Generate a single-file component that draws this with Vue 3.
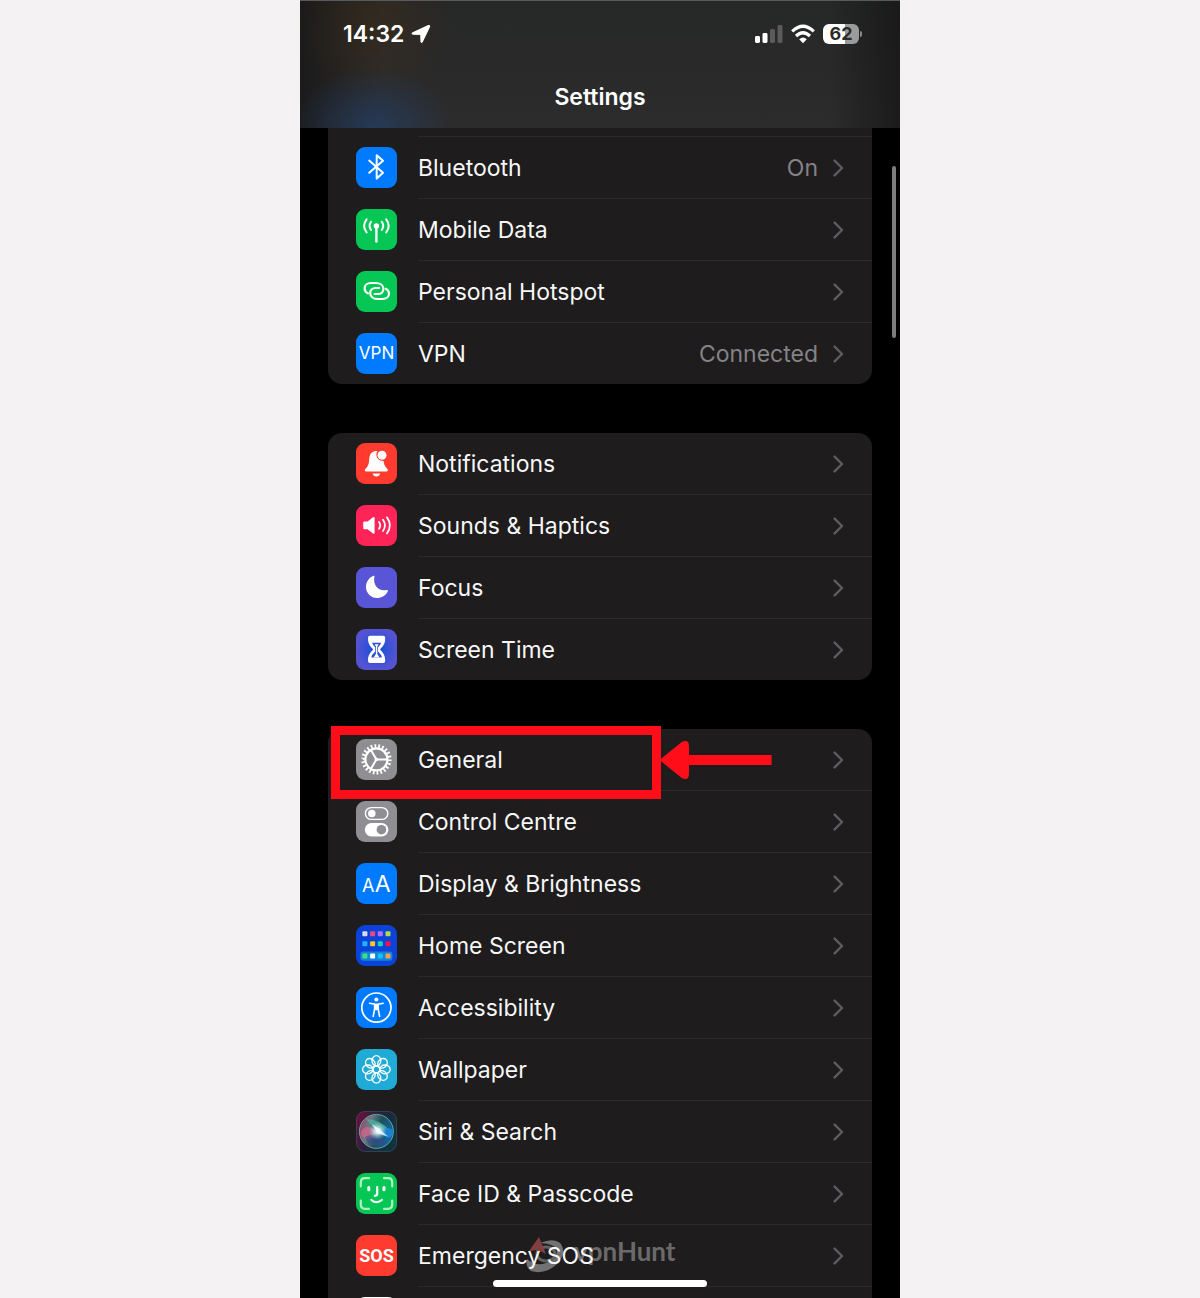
<template>
  <div class="page">
    <main class="phone">
      <!-- Header -->
      <header class="header">
        <div class="status-bar">
          <div class="status-left">
            <span>14:32</span>
            <svg width="20" height="20" viewBox="0 0 20 20" aria-hidden="true">
              <path d="M1.6 8.2 L17.2 1 Q19.8 0.4 19 3 L11.8 18 Q10.2 20 9.4 17.6 L9.2 11 L2 10.8 Q-0.6 9.8 1.6 8.2Z" fill="#fff" />
            </svg>
          </div>
          <div class="status-right">
            <svg width="28" height="20" viewBox="0 0 28 20" aria-hidden="true">
              <rect x="0" y="12" width="5" height="7" rx="1.4" fill="#fff" />
              <rect x="7.5" y="9" width="5" height="10" rx="1.4" fill="#fff" />
              <rect x="15" y="5" width="5" height="14" rx="1.4" fill="#5c5b5c" />
              <rect x="22.5" y="1" width="5" height="18" rx="1.4" fill="#5c5b5c" />
            </svg>
            <svg width="24" height="20" viewBox="0 0 24 20" aria-hidden="true">
              <g fill="none" stroke="#fff" stroke-width="3.2">
                <path d="M1.2 7.4 Q12 -2.8 22.8 7.4" />
                <path d="M5 12 Q12 5.4 19 12" />
              </g>
              <path d="M8.2 15.2 Q12 11.8 15.8 15.2 L12 19.2Z" fill="#fff" />
            </svg>
            <div class="battery">62</div>
          </div>
        </div>
        <h1>Settings</h1>
      </header>

      <!-- Settings list -->
      <nav class="groups">
        <ul v-for="(group, i) in groups" :key="i" class="group" :class="{ cut: i === 0 }">
          <li v-for="item in group" :key="item.label" class="row">
            <a href="#" class="link">
              <svg class="icon" viewBox="0 0 41 41" aria-hidden="true" v-html="icons[item.icon]"></svg>
              <span class="content">
                <span class="label">{{ item.label }}</span>
                <span v-if="item.value" class="value">{{ item.value }}</span>
                <svg class="chevron" width="11" height="18" viewBox="0 0 11 18" aria-hidden="true">
                  <path d="M1.6 1.6 L9 9 L1.6 16.4" />
                </svg>
              </span>
            </a>
            <div v-if="item.marked" class="marker">
              <svg class="arrow" width="112" height="40" viewBox="0 0 112 40" aria-hidden="true">
                <path d="M2 18 L22 1.8 Q29 -1 29 6 V15 H111.6 V25 H29 V34 Q29 41 22 38.2 L2 22 Q-0.6 20 2 18Z" fill="#ff0d18" />
              </svg>
            </div>
          </li>
        </ul>
      </nav>

      <div class="scroll-thumb"></div>

      <div class="watermark">
        <svg width="40" height="38" viewBox="0 0 40 38" aria-hidden="true">
          <path d="M14 7 Q28 1 35 8 Q41 18 30 29 Q18 39 5 35 Q-1 31 1 23 Q10 31 20 27 Q32 21 31 14 Q29 8 14 7Z" fill="#737273" />
          <ellipse cx="20" cy="18" rx="9" ry="7" fill="none" stroke="#626162" stroke-width="3" />
          <path d="M13 1 L20 18 L12 14 L3 15Z" fill="#843e40" />
        </svg>
        <span>vpnHunt</span>
      </div>

      <div class="home-indicator"></div>
    </main>
  </div>
</template>

<script setup>
const groups = [
  [
    { label: 'Bluetooth', icon: 'bluetooth', value: 'On' },
    { label: 'Mobile Data', icon: 'mobile' },
    { label: 'Personal Hotspot', icon: 'hotspot' },
    { label: 'VPN', icon: 'vpn', value: 'Connected' }
  ],
  [
    { label: 'Notifications', icon: 'notifications' },
    { label: 'Sounds & Haptics', icon: 'sounds' },
    { label: 'Focus', icon: 'focus' },
    { label: 'Screen Time', icon: 'screenTime' }
  ],
  [
    { label: 'General', icon: 'general', marked: true },
    { label: 'Control Centre', icon: 'control' },
    { label: 'Display & Brightness', icon: 'display' },
    { label: 'Home Screen', icon: 'home' },
    { label: 'Accessibility', icon: 'accessibility' },
    { label: 'Wallpaper', icon: 'wallpaper' },
    { label: 'Siri & Search', icon: 'siri' },
    { label: 'Face ID & Passcode', icon: 'faceId' },
    { label: 'Emergency SOS', icon: 'sos' },
    { label: '', icon: 'blank' }
  ]
]

const tile = (fill) => `<rect width="41" height="41" rx="9" fill="${fill}"/>`

// Rows of coloured squares on the home screen tile
const dots = [
  ['#d8dcf8', '#f2447c', '#b46cff', '#b4d84c'],
  ['#20b4ff', '#ffc61e', '#18d4b8', '#f4104c'],
  ['#40dc84', '#ffffff', '#18c0f8', '#f0a050']
]
const dotX = [6.4, 14.1, 21.8, 29.5]
const dotY = [6.2, 16.3, 28.6]
const homeDots = dots
  .map((row, y) => row.map((c, x) => `<rect x="${dotX[x]}" y="${dotY[y]}" width="5" height="5" rx="1" fill="${c}"/>`).join(''))
  .join('')

const petals = [0, 45, 90, 135, 180, 225, 270, 315]
  .map((a) => `<ellipse cx="20.4" cy="11.8" rx="4.4" ry="5.2" transform="rotate(${a} 20.4 20.4)"/>`)
  .join('')

const hotspotLoop = 'M12 22.4 C9.6 21.2 8.6 19.4 8.6 17.4 C8.6 14.2 11.2 12 15 12 H19.6 C24 12 27.4 14.4 27.4 18 C27.4 21 25.2 23 22 23 H18.6'

const icons = {
  bluetooth: tile('#007aff') +
    '<path d="M13.2 13.6 L27 25.8 L20.7 31.6 V8.2 L27 13.8 L13.2 25.8" fill="none" stroke="#fff" stroke-width="2" stroke-linejoin="round" stroke-linecap="round"/>',
  mobile: tile('#06c755') +
    '<g fill="none" stroke="#fff" stroke-width="2" stroke-linecap="round"><path d="M15 12.8 Q12.2 17 15 21"/><path d="M25.8 12.8 Q28.6 17 25.8 21"/><path d="M10.6 10.4 Q5.6 17 10.6 23.4"/><path d="M30.2 10.4 Q35.2 17 30.2 23.4"/><path d="M20.4 17 V32.6" stroke-width="2.4"/></g><circle cx="20.4" cy="17" r="2.7" fill="#fff"/>',
  hotspot: tile('#06c755') +
    `<g fill="none" stroke="#fff" stroke-width="2.1" stroke-linecap="round"><path d="${hotspotLoop}"/><path d="${hotspotLoop}" transform="rotate(180 20.8 20)"/></g>`,
  vpn: tile('#007aff') +
    '<text x="20.5" y="26" text-anchor="middle" font-size="17" fill="#fff">VPN</text>',
  notifications: tile('#ff3b30') +
    '<path d="M19.8 8 C15 8.6 13.4 12 13.2 16.4 C13 21.6 11.6 23.6 9.6 25.6 C8.2 27.4 8.8 28.6 10.4 28.6 H30.2 C32 28.6 32.4 27.4 31.2 25.8 C29 23.4 27.8 21.4 27.6 18 C23 18 20 14.8 20.4 11 Q20.6 9.2 21.6 8.1Z" fill="#fff"/><circle cx="26" cy="12.2" r="4.5" fill="#fff"/><path d="M16.6 30.4 H24.2 Q23.4 33.4 20.4 33.4 Q17.4 33.4 16.6 30.4Z" fill="#fff"/>',
  sounds: tile('#ff2457') +
    '<path d="M8.4 16.6 H11.6 L17 12.2 Q18.6 11.4 18.6 13.2 V27.6 Q18.6 29.4 17 28.6 L11.6 24.2 H8.4 Q7.2 24.2 7.2 23 V17.8 Q7.2 16.6 8.4 16.6Z" fill="#fff"/><g fill="none" stroke="#fff" stroke-width="1.8" stroke-linecap="round"><path d="M23 17 Q25.4 20.4 23 23.8"/><path d="M27 14.8 Q31 20.4 27 26"/><path d="M31 12.4 Q36.8 20.4 31 28.4"/></g>',
  focus: tile('#5856d6') +
    '<path d="M17.6 8.8 Q18.8 8.6 18.4 10 C16.6 18 22.6 24.8 30.6 23 Q32.4 22.8 31.8 24.2 C29.8 28.6 25.6 31 21 31 C14.8 31 10 26 10 20 C10 15 13 10.6 17.6 8.8Z" fill="#fff"/>',
  screenTime: '<defs><radialGradient id="st"><stop offset="0.3" stop-color="#2450d8"/><stop offset="1" stop-color="#5553d2"/></radialGradient></defs>' + tile('url(#st)') +
    '<path d="M14 6.8 H27.2 Q29.2 6.8 29.2 9 C29.2 15 27.4 16.8 24 20.4 C27.4 24 29.2 26 29.2 31.8 Q29.2 34 27.2 34 H14 Q12 34 12 31.8 C12 26 13.8 24 17.2 20.4 C13.8 16.8 12 15 12 9 Q12 6.8 14 6.8Z" fill="#fff"/><path d="M16 13.8 H25.2 Q24.4 16 22 18.4 V22.6 Q25.6 26 26 28.6 H15.2 Q15.6 26 19.2 22.6 V18.4 Q16.8 16 16 13.8Z" fill="#2c50d4"/><path d="M18.6 15.2 H22.6 L21.3 17.4 V25 L23.6 28.6 H17.6 L19.9 25 V17.4Z" fill="#fff"/>',
  general: tile('#8e8e93') +
    '<g fill="none" stroke="#fff"><circle cx="20.4" cy="20.4" r="11" stroke-width="2.2"/><circle cx="20.4" cy="20.4" r="13.4" stroke-width="3.6" pathLength="220" stroke-dasharray="4.6 5.4"/><path d="M20.4 20.4 H31.6 M20.4 20.4 L14.8 10.7 M20.4 20.4 L14.8 30.1" stroke-width="2"/></g><circle cx="20.4" cy="20.4" r="1.8" fill="#fff"/>',
  control: tile('#8e8e93') +
    '<rect x="9.4" y="6.6" width="22.4" height="11.8" rx="5.9" fill="none" stroke="#fff" stroke-width="1.4"/><circle cx="15.8" cy="12.5" r="3.8" fill="#fff"/><rect x="8.8" y="22" width="23.6" height="13.4" rx="6.7" fill="#fff"/><circle cx="25.4" cy="28.7" r="4.8" fill="#8e8e93"/>',
  display: tile('#007aff') +
    '<text x="6" y="28.6" font-size="18" fill="#fff">A</text><text x="18.8" y="28.6" font-size="23" fill="#fff">A</text>',
  home: tile('#0b42d8') + '<rect x="4.4" y="26.4" width="32" height="9.4" rx="3" fill="#1386d8"/>' + homeDots,
  accessibility: tile('#007aff') +
    '<circle cx="20.4" cy="20.6" r="14.6" fill="none" stroke="#fff" stroke-width="1.7"/><circle cx="20.4" cy="12.4" r="2" fill="#fff"/><path d="M13.6 16.2 L18.6 17.2 V22 L17.2 29.4 M27.2 16.2 L22.2 17.2 V22 L23.6 29.4" fill="none" stroke="#fff" stroke-width="1.6" stroke-linecap="round" stroke-linejoin="round"/><path d="M18 16.6 H22.8 V23.2 H18Z" fill="#fff"/>',
  wallpaper: tile('#1fabd5') +
    '<g fill="none" stroke="#fff" stroke-width="1.3">' + petals + '<circle cx="20.4" cy="20.4" r="3.4"/></g>',
  siri: '<defs><linearGradient id="sbg" x2="1" y2="0.4"><stop offset="0" stop-color="#7c0c3c"/><stop offset="0.5" stop-color="#26203e"/><stop offset="1" stop-color="#10343e"/></linearGradient><linearGradient id="orb" x2="1" y2="0.3"><stop offset="0" stop-color="#b02c60"/><stop offset="0.35" stop-color="#6a7c86"/><stop offset="0.65" stop-color="#1c5058"/><stop offset="1" stop-color="#1464a4"/></linearGradient><radialGradient id="glow"><stop offset="0" stop-color="#fff"/><stop offset="0.3" stop-color="#e8f8ff" stop-opacity="0.85"/><stop offset="1" stop-color="#8cd8e0" stop-opacity="0"/></radialGradient></defs>' + tile('url(#sbg)') +
    '<rect x="0.5" y="0.5" width="40" height="40" rx="8.5" fill="none" stroke="#35505c" stroke-opacity="0.7"/><circle cx="20.4" cy="20.4" r="17" fill="url(#orb)" stroke="#5ea898" stroke-width="1"/><path d="M10 8 Q26 9 33 19 Q27 18 21 20Z" fill="#4cb8a0" opacity="0.7"/><ellipse cx="12" cy="22" rx="7" ry="6" fill="#f0608c" opacity="0.6"/><path d="M21 21 Q34 14 37 20 Q36 29 30 26Z" fill="#1b8be0" opacity="0.8"/><path d="M9 26 Q20 20 30 31 Q21 39 12 32Z" fill="#3c4a90" opacity="0.6"/><circle cx="21.5" cy="20" r="9" fill="url(#glow)"/><path d="M16 13 L24 18.4 L32 25.6 L22 22.4Z" fill="#fff" opacity="0.75"/>',
  faceId: tile('#06c755') +
    '<path d="M4.8 13.4 V9.4 Q4.8 5.2 9 5.2 H13 M28 5.2 H32 Q36.2 5.2 36.2 9.4 V13.4 M36.2 27.6 V31.6 Q36.2 35.8 32 35.8 H28 M13 35.8 H9 Q4.8 35.8 4.8 31.6 V27.6" fill="none" stroke="#aef2c4" stroke-width="2.2" stroke-linecap="round"/><path d="M12.8 14.6 V16.8 M28 14.6 V16.8" stroke="#fff" stroke-width="3" stroke-linecap="round"/><path d="M21.2 14 V20.6 Q21.2 22.8 18.8 22.8 M15.4 27 Q20.4 31.4 25.8 27" fill="none" stroke="#fff" stroke-width="2.2" stroke-linecap="round"/>',
  sos: tile('#ff3b30') +
    '<text x="20.5" y="27" text-anchor="middle" class="sos-text" font-size="18" font-weight="700" fill="#fff">SOS</text>',
  blank: tile('#ffffff')
}
</script>

<style>
body {
  margin: 0;
  background-color: #f4f2f3;
}

.sos-text {
  font-family: Roboto, sans-serif;
}
</style>

<style scoped>
.page {
  display: flex;
  justify-content: center;
  font-family: Inter, 'Noto Sans', sans-serif;
}

.phone {
  position: relative;
  width: 100%;
  max-width: 600px;
  height: 100vh;
  overflow: hidden;
  background-color: #000;
  color: #f7f7f7;
}

.header {
  box-sizing: border-box;
  height: 128px;
  border-top: 1px solid #5a5a5a;
  background:
    radial-gradient(ellipse 80px 60px at 12% 100%, rgba(34, 66, 110, 0.65), transparent),
    radial-gradient(ellipse 80px 80px at 12% 18%, rgba(72, 48, 20, 0.4), transparent),
    linear-gradient(90deg, rgba(20, 20, 20, 0.7), transparent 14%, transparent 88%, rgba(20, 20, 20, 0.7)),
    linear-gradient(#262727, #2d2c2d);
}

.status-bar {
  display: flex;
  justify-content: space-between;
  align-items: center;
  height: 66px;
  padding: 0 41px 0 43px;
}

.status-left,
.status-right {
  display: flex;
  align-items: center;
  color: #fff;
}

.status-left {
  gap: 7px;
  font-size: 23px;
  font-weight: 600;
}

.status-right {
  gap: 8px;
}

.battery {
  position: relative;
  width: 36px;
  height: 20px;
  border-radius: 6px;
  background: linear-gradient(90deg, #fff 62%, #9b9b9b 62%);
  color: #2b2b2b;
  font-size: 18px;
  font-weight: 700;
  line-height: 20px;
  text-align: center;
}

.battery::after {
  content: '';
  position: absolute;
  top: 7px;
  right: -3px;
  width: 2px;
  height: 6px;
  border-radius: 0 2px 2px 0;
  background-color: #8b8b8b;
}

h1 {
  margin: 0;
  font-size: 23px;
  font-weight: 600;
  line-height: 61px;
  text-align: center;
  color: #fff;
}

.groups {
  display: flex;
  flex-direction: column;
  gap: 49px;
  padding: 0 28px;
}

.group {
  margin: 0;
  padding: 0;
  list-style: none;
  border-radius: 14px;
  background-color: #1e1c1d;
}

.group.cut {
  border-radius: 0 0 14px 14px;
}

.group.cut::before {
  content: '';
  display: block;
  height: 8px;
  margin-left: 90px;
  border-bottom: 1px solid #2c2b2c;
}

.row {
  position: relative;
}

.link {
  display: flex;
  gap: 21px;
  padding-left: 28px;
  color: inherit;
  text-decoration: none;
}

.icon {
  width: 41px;
  height: 41px;
  margin-top: 10px;
}

.content {
  display: flex;
  flex: 1;
  align-items: center;
  height: 61px;
  padding-right: 28px;
  border-bottom: 1px solid #2c2b2c;
}

.row:last-child .content {
  border-bottom: none;
}

.label {
  position: relative;
  z-index: 2;
  flex: 1;
  font-size: 23px;
}

.value {
  margin-right: 15px;
  font-size: 23px;
  color: #848388;
}

.chevron {
  fill: none;
  stroke: #5d5c60;
  stroke-width: 2.4;
  stroke-linecap: round;
  stroke-linejoin: round;
}

.marker {
  position: absolute;
  z-index: 3;
  top: -3px;
  left: 3px;
  box-sizing: border-box;
  width: 330px;
  height: 73px;
  border: 9px solid #ff0d18;
  pointer-events: none;
}

.arrow {
  position: absolute;
  top: 5px;
  left: 320px;
}

.scroll-thumb {
  position: absolute;
  top: 166px;
  right: 4px;
  width: 4px;
  height: 172px;
  border-radius: 2px;
  background-color: #7c7c7d;
}

.watermark {
  position: absolute;
  z-index: 1;
  bottom: 24px;
  left: 226px;
  display: flex;
  align-items: center;
  gap: 8px;
  color: #6b6a6b;
  font-family: Lato, sans-serif;
  font-size: 26px;
  font-weight: 700;
  line-height: 26px;
}

.watermark span {
  padding-bottom: 8px;
}

.home-indicator {
  position: absolute;
  z-index: 4;
  bottom: 11px;
  left: 50%;
  width: 214px;
  height: 7px;
  border-radius: 4px;
  background-color: #fff;
  transform: translateX(-50%);
}
</style>
